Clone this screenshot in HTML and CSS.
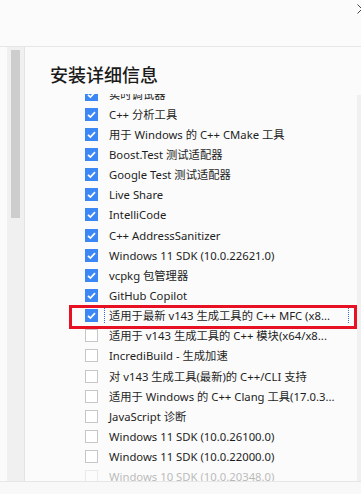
FILE: index.html
```html
<!DOCTYPE html>
<html lang="zh-CN">
<head>
<meta charset="utf-8">
<title>安装详细信息</title>
<link rel="stylesheet" href="styles.css">
</head>
<body>
<div class="window">
  <div class="topbar">
    <svg class="close" width="10" height="10" viewBox="0 0 10 10"><path d="M0.5 0.5 L9.5 9.5 M9.5 0.5 L0.5 9.5" stroke="#444" stroke-width="1" fill="none"/></svg>
  </div>
  <div class="main">
    <div class="sidebar"><div class="thumb"></div></div>
    <div class="content">
      <h1 class="title">安装详细信息</h1>
      <div class="viewport">
        <ul class="list">
          <li class="row"><span class="cb on"></span><span class="label">实时调试器</span></li>
          <li class="row"><span class="cb on"></span><span class="label">C++ 分析工具</span></li>
          <li class="row"><span class="cb on"></span><span class="label">用于 Windows 的 C++ CMake 工具</span></li>
          <li class="row"><span class="cb on"></span><span class="label">Boost.Test 测试适配器</span></li>
          <li class="row"><span class="cb on"></span><span class="label">Google Test 测试适配器</span></li>
          <li class="row"><span class="cb on"></span><span class="label">Live Share</span></li>
          <li class="row"><span class="cb on"></span><span class="label">IntelliCode</span></li>
          <li class="row"><span class="cb on"></span><span class="label">C++ AddressSanitizer</span></li>
          <li class="row"><span class="cb on"></span><span class="label">Windows 11 SDK (10.0.22621.0)</span></li>
          <li class="row"><span class="cb on"></span><span class="label">vcpkg 包管理器</span></li>
          <li class="row"><span class="cb on"></span><span class="label">GitHub Copilot</span></li>
          <li class="row focused"><span class="cb on"></span><span class="label">适用于最新 v143 生成工具的 C++ MFC (x8...</span><span class="mark"></span></li>
          <li class="row"><span class="cb"></span><span class="label">适用于 v143 生成工具的 C++ 模块(x64/x8...</span></li>
          <li class="row"><span class="cb"></span><span class="label">IncrediBuild - 生成加速</span></li>
          <li class="row"><span class="cb"></span><span class="label">对 v143 生成工具(最新)的 C++/CLI 支持</span></li>
          <li class="row"><span class="cb"></span><span class="label">适用于 Windows 的 C++ Clang 工具(17.0.3...</span></li>
          <li class="row"><span class="cb"></span><span class="label">JavaScript 诊断</span></li>
          <li class="row"><span class="cb"></span><span class="label">Windows 11 SDK (10.0.26100.0)</span></li>
          <li class="row"><span class="cb"></span><span class="label">Windows 11 SDK (10.0.22000.0)</span></li>
          <li class="row faded"><span class="cb"></span><span class="label">Windows 10 SDK (10.0.20348.0)</span></li>
        </ul>
        <div class="rtrack"></div>
      </div>
    </div>
  </div>
  <div class="bottombar"></div>
</div>
</body>
</html>
```

FILE: styles.css
```css
* { box-sizing: border-box; }
html, body { margin: 0; padding: 0; }
body {
  width: 361px;
  height: 494px;
  overflow: hidden;
  background: #fbfbfb;
  font-family: "Noto Sans", "Noto Sans CJK SC", sans-serif;
  color: #1e1e1e;
}
.window { display: flex; flex-direction: column; height: 494px; }
.topbar {
  position: relative;
  height: 47px;
  flex: none;
  border-bottom: 1px solid #e6e6e6;
  background: #fbfbfb;
}
.close { position: absolute; left: 357px; top: 4px; }
.main { display: flex; height: 434px; flex: none; }
.sidebar {
  margin-left: 7px;
  width: 18px;
  flex: none;
  background: #f0f0f0;
  border-right: 1px solid #e4e4e4;
  padding: 3px 0 0 4px;
}
.thumb { width: 9px; height: 168px; background: #cdcdcd; }
.content { flex: 1; display: flex; flex-direction: column; min-width: 0; }
.title {
  margin: 15px 0 0 25px;
  font-family: "Noto Sans CJK SC", sans-serif;
  font-size: 18px;
  font-weight: 500;
  line-height: 24px;
  color: #1a1a1a;
  height: 32px;
}
.viewport { flex: 1; display: flex; overflow: hidden; min-height: 0; }
.list {
  flex: 1;
  list-style: none;
  margin: -10px 0 0 0;
  padding: 0 0 0 60px;
}
.row {
  position: relative;
  height: 20.15px;
  display: flex;
  align-items: center;
  font-size: 11.3px;
}
.cb {
  width: 13px;
  height: 13px;
  flex: none;
  border: 1px solid #c6c6c6;
  background: #fff;
  margin-right: 6px;
}
.cb.on {
  border: none;
  background: #3b87f5 url("data:image/svg+xml;utf8,<svg xmlns='http://www.w3.org/2000/svg' width='13' height='13'><path d='M3 6.8 L5.4 9.1 L10 4.2' stroke='white' stroke-width='1.7' fill='none'/></svg>") no-repeat center;
}
.label {
  padding: 0 5px;
  line-height: 15px;
  white-space: nowrap;
}
.focused .label {
  width: 245px;
  padding: 0 4px;
  border-left: 1px dotted #2a6fd8;
  border-right: 1px dotted #2a6fd8;
}
.mark {
  position: absolute;
  left: -16px;
  top: -1px;
  width: 288px;
  height: 24px;
  border: 3px solid #e81123;
}
.faded { opacity: 0.3; }
.rtrack { width: 4px; flex: none; background: #f0f0f0; margin-top: 1px; }
.bottombar { flex: 1; border-top: 1px solid #e6e6e6; background: #f8f8f8; }
```
